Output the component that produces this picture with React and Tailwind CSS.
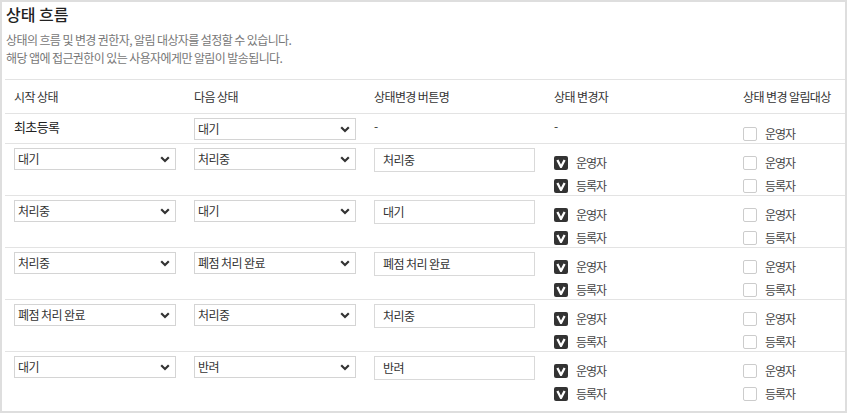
import React from 'react';

const rows = [
  { from: '대기', to: '처리중', label: '처리중' },
  { from: '처리중', to: '대기', label: '대기' },
  { from: '처리중', to: '폐점 처리 완료', label: '폐점 처리 완료' },
  { from: '폐점 처리 완료', to: '처리중', label: '처리중' },
  { from: '대기', to: '반려', label: '반려' },
];

const Select = ({ value }) => (
  <div className="flex items-center justify-between w-[162px] h-[22px] border border-[#d4d4d4] bg-white pl-[3px] pr-[5px] text-[12px] text-[#333]">
    <span className="leading-none">{value}</span>
    <svg width="10" height="7" viewBox="0 0 10 7">
      <path d="M1.2 1.3 L5 5 L8.8 1.3" fill="none" stroke="#333" strokeWidth="2.2" />
    </svg>
  </div>
);

const Check = ({ checked, label }) => (
  <div className="flex items-center gap-[8px] h-[14px]">
    {checked ? (
      <div className="w-[14px] h-[14px] rounded-[2px] bg-[#333] flex items-center justify-center">
        <svg width="10" height="9" viewBox="0 0 10 9">
          <path d="M1.4 1 L5 8 L8.6 1" fill="none" stroke="#fff" strokeWidth="2.3" strokeLinejoin="round" />
        </svg>
      </div>
    ) : (
      <div className="w-[14px] h-[14px] rounded-[2px] border border-[#ccc] bg-white" />
    )}
    <span className="text-[12px] text-[#444] leading-none tracking-[-1px]">{label}</span>
  </div>
);

export default function App() {
  return (
    <div
      className="w-[848px] h-[414px] bg-white tracking-[-0.6px]"
      style={{ fontFamily: '"Noto Sans CJK KR", "Noto Sans", sans-serif' }}
    >
      <div className="w-[847px] h-[413px] border-2 border-[#dedede] flex flex-col">
        {/* 제목 */}
        <div className="pl-[4px] pt-[2px]">
          <h2 className="text-[16px] leading-[21px] font-medium text-[#222] tracking-normal">상태 흐름</h2>
          <p className="mt-[6px] text-[12px] leading-[18px] text-[#777]">
            상태의 흐름 및 변경 권한자, 알림 대상자를 설정할 수 있습니다.
            <br />
            해당 앱에 접근권한이 있는 사용자에게만 알림이 발송됩니다.
          </p>
        </div>

        {/* 테이블 */}
        <div className="ml-[3px] mt-[12px] text-[12px] text-[#333]">
          <div className="grid grid-cols-[180px_180px_180px_189px_1fr] h-[35px] border-y border-[#e3e3e3] items-center">
            <div className="pl-[9px]">시작 상태</div>
            <div className="pl-[9px]">다음 상태</div>
            <div className="pl-[9px]">상태변경 버튼명</div>
            <div className="pl-[9px]">상태 변경자</div>
            <div className="pl-[9px]">상태 변경 알림대상</div>
          </div>

          <div className="grid grid-cols-[180px_180px_180px_189px_1fr] h-[30px] border-b border-[#e3e3e3]">
            <div className="pl-[9px] pt-[4px] text-[13px] leading-[18px] text-[#222]">최초등록</div>
            <div className="pl-[9px] pt-[4px]"><Select value="대기" /></div>
            <div className="pl-[9px] pt-[3px] leading-[18px]">-</div>
            <div className="pl-[9px] pt-[3px] leading-[18px]">-</div>
            <div className="pl-[9px] pt-[13px]"><Check label="운영자" /></div>
          </div>

          {rows.map((r, i) => (
            <div
              key={i}
              className={`grid grid-cols-[180px_180px_180px_189px_1fr] h-[52px] ${i < rows.length - 1 ? 'border-b border-[#e3e3e3]' : ''}`}
            >
              <div className="pl-[9px] pt-[4px]"><Select value={r.from} /></div>
              <div className="pl-[9px] pt-[4px]"><Select value={r.to} /></div>
              <div className="pl-[9px] pt-[4px]">
                <div className="w-[161px] h-[24px] border border-[#d9d9d9] pl-[8px] flex items-center text-[12px] text-[#333]">
                  {r.label}
                </div>
              </div>
              <div className="pl-[9px] pt-[12px] flex flex-col gap-[9px]">
                <Check checked label="운영자" />
                <Check checked label="등록자" />
              </div>
              <div className="pl-[9px] pt-[12px] flex flex-col gap-[9px]">
                <Check label="운영자" />
                <Check label="등록자" />
              </div>
            </div>
          ))}
        </div>
      </div>
    </div>
  );
}
